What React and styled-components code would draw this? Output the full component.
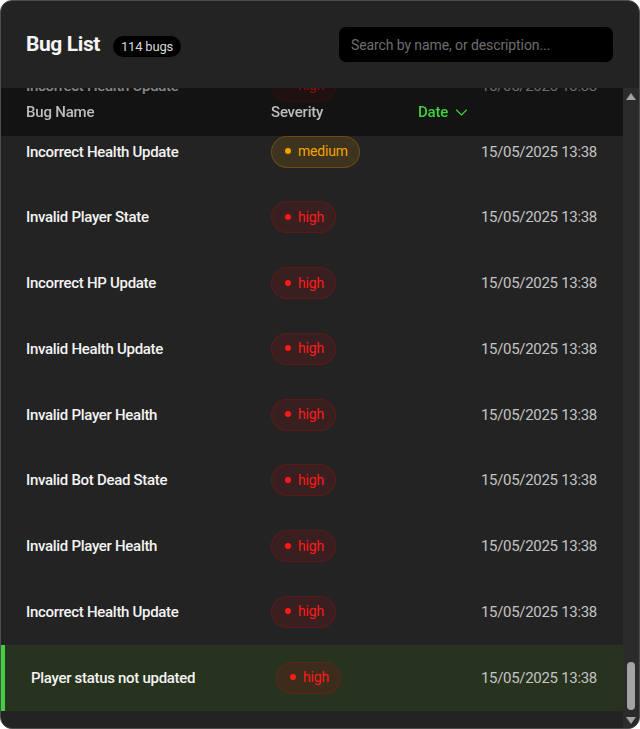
import { useLayoutEffect, useRef } from "react";
import styled, { createGlobalStyle, css } from "styled-components";

const GlobalStyle = createGlobalStyle`
  html, body {
    margin: 0;
    background: #ffffff;
  }
  * {
    box-sizing: border-box;
  }
`;

const FONT = `"Roboto", "Liberation Sans", sans-serif`;

const NAMES = [
  "Incorrect Health Update",
  "Invalid Player State",
  "Incorrect HP Update",
  "Invalid Health Update",
  "Invalid Player Health",
  "Invalid Bot Dead State",
  "Invalid Player Health",
  "Incorrect Health Update",
];

// the last ten rows are the ones in view
const TAIL = [
  { name: "Incorrect Health Update", severity: "high" },
  { name: "Incorrect Health Update", severity: "medium" },
  { name: "Invalid Player State", severity: "high" },
  { name: "Incorrect HP Update", severity: "high" },
  { name: "Invalid Health Update", severity: "high" },
  { name: "Invalid Player Health", severity: "high" },
  { name: "Invalid Bot Dead State", severity: "high" },
  { name: "Invalid Player Health", severity: "high" },
  { name: "Incorrect Health Update", severity: "high" },
  { name: "Player status not updated", severity: "high", selected: true },
];

const bugs = [
  ...Array.from({ length: 114 - TAIL.length }, (_, i) => ({
    name: NAMES[i % NAMES.length],
    severity: i % 5 === 2 ? "medium" : "high",
  })),
  ...TAIL,
].map((b, i) => ({ ...b, id: i, date: "15/05/2025 13:38" }));

const SEVERITY = {
  high: { color: "#ff1a1a", bg: "rgba(255, 0, 0, 0.1)", border: "rgba(255, 0, 0, 0.18)" },
  medium: { color: "#f5a300", bg: "rgba(255, 170, 0, 0.12)", border: "rgba(255, 170, 0, 0.22)" },
};

function Chevron() {
  return (
    <svg width="15" height="15" viewBox="0 0 24 24" fill="none" stroke="currentColor" strokeWidth="1.8" strokeLinecap="round" strokeLinejoin="round">
      <polyline points="4 8 12 16 20 8" />
    </svg>
  );
}

function Arrow({ down }) {
  return (
    <svg width="10" height="7" viewBox="0 0 10 7">
      <polygon points={down ? "0,0 10,0 5,7" : "0,7 10,7 5,0"} fill="#a3a3a3" />
    </svg>
  );
}

export default function App() {
  const scrollRef = useRef(null);

  useLayoutEffect(() => {
    const el = scrollRef.current;
    if (el) el.scrollTop = el.scrollHeight;
  }, []);

  return (
    <>
      <GlobalStyle />
      <Panel>
        <Header>
          <TitleGroup>
            <Title>Bug List</Title>
            <CountBadge>114 bugs</CountBadge>
          </TitleGroup>
          <Search placeholder="Search by name, or description..." />
        </Header>
        <Body>
          <ScrollArea ref={scrollRef}>
            <HeadRow>
              <HeadCell>Bug Name</HeadCell>
              <HeadCell>Severity</HeadCell>
              <HeadCell active>
                Date <Chevron />
              </HeadCell>
            </HeadRow>
            {bugs.map((bug) => (
              <Row key={bug.id} selected={bug.selected}>
                <Name>{bug.name}</Name>
                <div>
                  <Pill level={bug.severity}>
                    <Dot />
                    {bug.severity}
                  </Pill>
                </div>
                <DateCell>{bug.date}</DateCell>
              </Row>
            ))}
          </ScrollArea>
          <ScrollBar>
            <Arrow />
            <Thumb />
            <Arrow down />
          </ScrollBar>
        </Body>
      </Panel>
    </>
  );
}

const Panel = styled.div`
  width: 640px;
  height: 729px;
  display: flex;
  flex-direction: column;
  background: #232323;
  border: 1px solid #4d4d4d;
  border-radius: 12px;
  overflow: hidden;
  font-family: ${FONT};
  color: #f2f2f2;
`;

const Header = styled.header`
  height: 87px;
  flex: none;
  display: flex;
  align-items: center;
  justify-content: space-between;
  padding: 0 26px 0 25px;
`;

const TitleGroup = styled.div`
  display: flex;
  align-items: center;
  gap: 13px;
  padding-bottom: 2px;
`;

const Title = styled.h1`
  margin: 0;
  font-size: 21px;
  font-weight: 700;
  letter-spacing: -0.4px;
  color: #f5f5f5;
`;

const CountBadge = styled.span`
  background: #000;
  color: #d8d8d8;
  font-size: 13px;
  letter-spacing: -0.2px;
  padding: 3px 8px;
  border-radius: 12px;
  margin-top: 5px;
`;

const Search = styled.input`
  width: 274px;
  height: 35px;
  background: #000;
  border: none;
  border-radius: 7px;
  padding: 0 12px;
  font-family: ${FONT};
  font-size: 14px;
  letter-spacing: -0.1px;
  color: #ddd;
  outline: none;
  &::placeholder {
    color: #6e6e6e;
  }
`;

const Body = styled.div`
  flex: 1;
  min-height: 0;
  display: flex;
`;

const ScrollArea = styled.div`
  flex: 1;
  overflow-y: scroll;
  padding-bottom: 17px;
  scrollbar-width: none;
  &::-webkit-scrollbar {
    display: none;
  }
`;

const ScrollBar = styled.div`
  width: 16px;
  flex: none;
  display: flex;
  flex-direction: column;
  align-items: center;
  background: #2b2b2b;
  padding: 5px 0 4px;
`;

const Thumb = styled.div`
  width: 8px;
  height: 48px;
  margin: auto 0 7px;
  border-radius: 4px;
  background: #a3a3a3;
`;

const grid = css`
  display: grid;
  grid-template-columns: 245px 147px 1fr;
  align-items: center;
  padding: 0 26px 0 25px;
`;

const HeadRow = styled.div`
  ${grid};
  position: sticky;
  top: 0;
  z-index: 2;
  height: 48px;
  background: rgba(0, 0, 0, 0.45);
`;

const HeadCell = styled.div`
  display: flex;
  align-items: center;
  gap: 6px;
  font-size: 15px;
  font-weight: 500;
  letter-spacing: -0.2px;
  color: ${(p) => (p.active ? "#3fd13f" : "#bdbdbd")};
`;

const Row = styled.div`
  ${grid};
  height: 65.75px;
  ${(p) =>
    p.selected &&
    css`
      background: #27321f;
      border-left: 4px solid #3fcf3f;
      padding-left: 26px;
    `}
`;

const Name = styled.div`
  font-size: 15px;
  font-weight: 500;
  letter-spacing: -0.3px;
  color: #f4f4f4;
`;

const Pill = styled.span`
  display: inline-flex;
  align-items: center;
  gap: 7px;
  height: 32px;
  padding: 0 11px 1px 13px;
  border-radius: 16px;
  font-size: 14px;
  letter-spacing: -0.2px;
  color: ${(p) => SEVERITY[p.level].color};
  background: ${(p) => SEVERITY[p.level].bg};
  border: 1px solid ${(p) => SEVERITY[p.level].border};
`;

const Dot = styled.span`
  width: 6px;
  height: 6px;
  border-radius: 50%;
  background: currentColor;
`;

const DateCell = styled.div`
  justify-self: end;
  font-size: 15px;
  letter-spacing: -0.3px;
  color: #c4c4c4;
`;
